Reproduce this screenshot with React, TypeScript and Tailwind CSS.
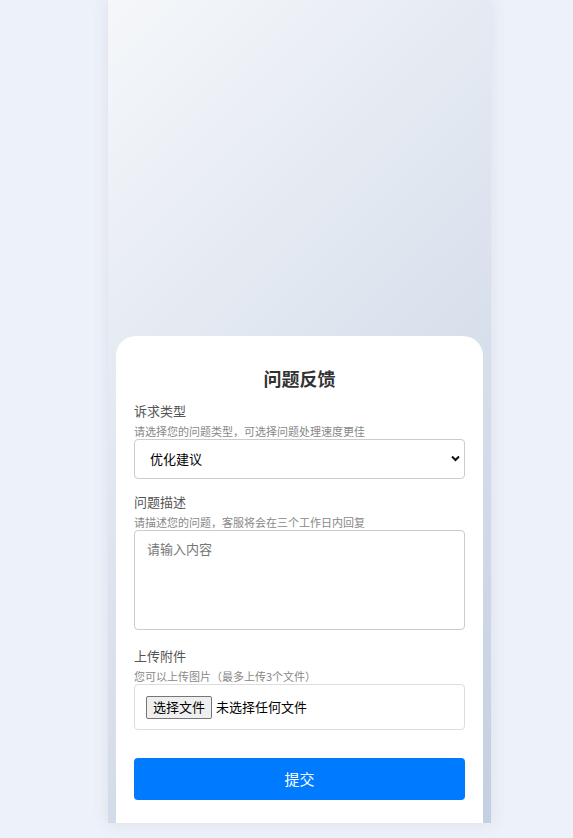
import React from "react";

export default function App() {
  return (
    <div className="min-h-[838px] w-full bg-[#edf1f9] font-['Noto_Sans_CJK_SC','Microsoft_YaHei',sans-serif]">
      <div className="ml-[108px] flex h-[823px] w-[383px] flex-col justify-end bg-[linear-gradient(135deg,#f5f7fa_0%,#c3cfe2_100%)] shadow-[0_0_16px_rgba(90,100,130,0.12)]">
        <div className="mx-2 rounded-t-[20px] bg-white px-[18px] pb-[23px] pt-[28px]">
          <h1 className="mb-[9px] text-center text-[18px] font-bold leading-[28px] text-[#333]">
            问题反馈
          </h1>

          <div className="text-[13px] leading-[20px] text-[#555]">诉求类型</div>
          <div className="mt-[2px] text-[11px] leading-[16px] text-[#888]">
            请选择您的问题类型，可选择问题处理速度更佳
          </div>
          <div className="relative h-[40px]">
            <select
              defaultValue="优化建议"
              className="h-[40px] w-full appearance-none rounded-[4px] border border-[#ccc] bg-white pl-[15px] pr-8 text-[13px] text-black outline-none"
            >
              <option value="优化建议">优化建议</option>
              <option value="功能异常">功能异常</option>
              <option value="其他问题">其他问题</option>
            </select>
            <svg
              className="pointer-events-none absolute right-[5px] top-[16px]"
              width="9"
              height="7"
              viewBox="0 0 9 7"
            >
              <path d="M1 1.5 L4.5 5 L8 1.5" fill="none" stroke="#111" strokeWidth="2" />
            </svg>
          </div>

          <div className="mt-[13px] text-[13px] leading-[20px] text-[#555]">问题描述</div>
          <div className="mt-[2px] text-[11px] leading-[16px] text-[#888]">
            请描述您的问题，客服将会在三个工作日内回复
          </div>
          <textarea
            placeholder="请输入内容"
            className="block h-[100px] w-full resize-none rounded-[4px] border border-[#ccc] px-[12px] pt-[10px] text-[13px] leading-[16px] text-black outline-none placeholder:text-[#777]"
          />

          <div className="mt-[16px] text-[13px] leading-[20px] text-[#555]">上传附件</div>
          <div className="mt-[2px] text-[11px] leading-[16px] text-[#888]">
            您可以上传图片（最多上传3个文件）
          </div>
          <label className="flex h-[46px] w-full items-center rounded-[4px] border border-[#ddd] pl-[11px]">
            <input type="file" accept="image/*" multiple className="hidden" />
            <span className="flex h-[23px] items-center rounded-[2px] border border-[#767676] bg-[#efefef] px-[6px] text-[13px] text-black">
              选择文件
            </span>
            <span className="ml-[4px] text-[13px] text-black">未选择任何文件</span>
          </label>

          <button className="mt-[28px] flex h-[42px] w-full items-center justify-center rounded-[4px] bg-[#007bff] text-[15px] text-white">
            提交
          </button>
        </div>
      </div>
    </div>
  );
}
